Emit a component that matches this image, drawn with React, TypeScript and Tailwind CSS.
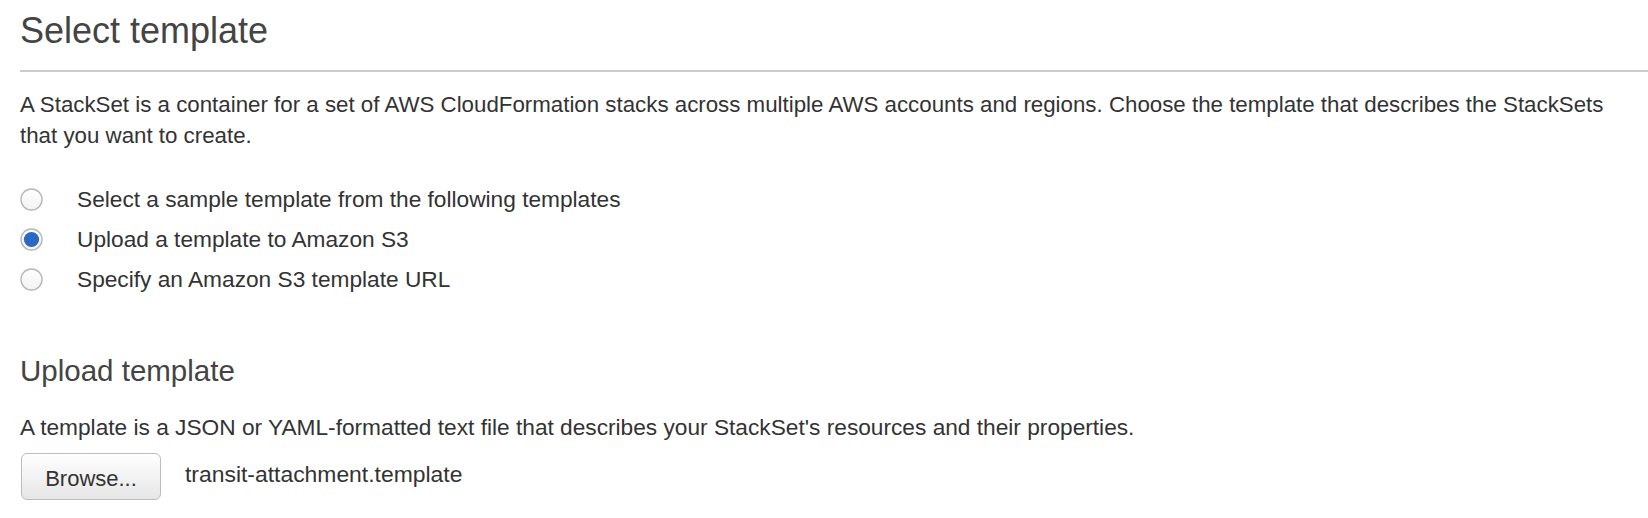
import React from "react";

function Radio({ checked }: { checked?: boolean }) {
  return (
    <svg width="23" height="23" viewBox="0 0 23 23" className="shrink-0">
      <defs>
        <linearGradient id={checked ? "rg1" : "rg0"} x1="0" y1="0" x2="0" y2="1">
          <stop offset="0" stopColor="#ffffff" />
          <stop offset="1" stopColor="#f2f2f2" />
        </linearGradient>
      </defs>
      <circle cx="11.5" cy="11.5" r="10.5" fill={`url(#${checked ? "rg1" : "rg0"})`} stroke="#b8b8b8" strokeWidth="1.4" />
      {checked && <circle cx="11.5" cy="11.5" r="7.6" fill="#2a68c2" />}
    </svg>
  );
}

const options = [
  { label: "Select a sample template from the following templates", checked: false },
  { label: "Upload a template to Amazon S3", checked: true },
  { label: "Specify an Amazon S3 template URL", checked: false },
];

export default function App() {
  return (
    <div
      className="w-[1648px] h-[518px] bg-white pl-[20px] pt-[11px] text-[#333333] overflow-hidden"
      style={{ fontFamily: '"Liberation Sans", Arial, Helvetica, sans-serif' }}
    >
      <h1 className="text-[36px] leading-[40px] text-[#444444] font-normal">Select template</h1>
      <div className="mt-[19px] h-[2px] bg-[#cccccc]" />
      <p className="mt-[17px] w-[1620px] text-[22.3px] leading-[31px]">
        A StackSet is a container for a set of AWS CloudFormation stacks across multiple AWS accounts and regions. Choose
        the template that describes the StackSets that you want to create.
      </p>
      <div className="mt-[28px] flex flex-col">
        {options.map((o) => (
          <div key={o.label} className="h-[40px] flex items-center">
            <Radio checked={o.checked} />
            <span className="ml-[34px] text-[22.7px] leading-[31px]">{o.label}</span>
          </div>
        ))}
      </div>
      <h2 className="mt-[56px] text-[29.5px] leading-[32px] text-[#444444] font-normal">Upload template</h2>
      <p className="mt-[25px] text-[22.7px] leading-[31px]">
        A template is a JSON or YAML-formatted text file that describes your StackSet's resources and their properties.
      </p>
      <div className="mt-[10px] flex items-center">
        <button className="ml-[1px] w-[140px] h-[47px] rounded-[6px] border border-[#bdbdbd] bg-gradient-to-b from-[#ffffff] to-[#e6e6e6] text-[22px] leading-[31px] text-[#333333] pt-[3px]">
          Browse...
        </button>
        <span className="ml-[24px] text-[22.9px] leading-[31px] -mt-[5px]">transit-attachment.template</span>
      </div>
    </div>
  );
}
